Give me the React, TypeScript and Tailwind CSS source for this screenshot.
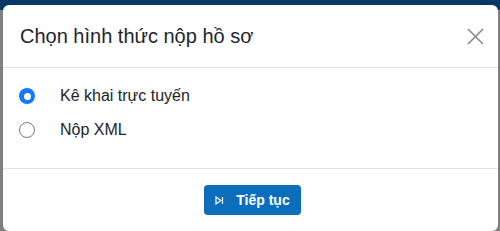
import React, { useState } from "react";

const OPTIONS = [
  { id: "online", label: "Kê khai trực tuyến" },
  { id: "xml", label: "Nộp XML" },
];

function StepIcon() {
  return (
    <svg width="9" height="9" viewBox="0 0 9 9" fill="none" stroke="currentColor" strokeWidth="1.2">
      <path d="M1 1 L6 4.5 L1 8 Z" />
      <path d="M7.5 1 V8" />
    </svg>
  );
}

export default function App() {
  const [selected, setSelected] = useState("online");

  return (
    <div
      className="h-[231px] w-[500px] overflow-hidden bg-[linear-gradient(#063766_0_10px,#808080_10px)] pl-[3px] pt-[5px]"
      style={{ fontFamily: "'Liberation Sans', Arial, sans-serif" }}
    >
      <div className="flex h-[226px] w-[495px] flex-col rounded-[6px] bg-white">
        {/* Header */}
        <div className="flex h-[63px] items-center justify-between border-b border-[#dee2e6] pl-[17px] pr-[13px]">
          <h5 className="text-[20px] leading-[30px] text-[#212529]">Chọn hình thức nộp hồ sơ</h5>
          <button className="flex h-[20px] w-[20px] items-center justify-center text-[#8a8a8a]">
            <svg width="17" height="17" viewBox="0 0 17 17" stroke="currentColor" strokeWidth="1.6">
              <path d="M1 1 L16 16 M16 1 L1 16" />
            </svg>
          </button>
        </div>

        {/* Body */}
        <div className="border-b border-[#dee2e6] px-[16px] pt-[16px] pb-[26px]">
          {OPTIONS.map((o, i) => (
            <label
              key={o.id}
              className={`flex h-[24px] cursor-pointer items-center ${i === 0 ? "mb-[10px]" : ""}`}
            >
              {selected === o.id ? (
                <span className="flex h-[16px] w-[16px] items-center justify-center rounded-full bg-[#1677ff]">
                  <span className="h-[7px] w-[7px] rounded-full bg-white" />
                </span>
              ) : (
                <span className="h-[16px] w-[16px] rounded-full border border-[#7a7a7a] bg-white" />
              )}
              <input
                type="radio"
                className="hidden"
                checked={selected === o.id}
                onChange={() => setSelected(o.id)}
              />
              <span className="ml-[25px] text-[16px] text-[#212529]">{o.label}</span>
            </label>
          ))}
        </div>

        {/* Footer */}
        <div className="flex justify-center pt-[16px] pl-[4px]">
          <button className="flex h-[30px] w-[97px] items-center justify-center gap-[12px] rounded-[4px] bg-[#0a6ebd] text-[14px] font-bold text-white">
            <StepIcon />
            Tiếp tục
          </button>
        </div>
      </div>
    </div>
  );
}
